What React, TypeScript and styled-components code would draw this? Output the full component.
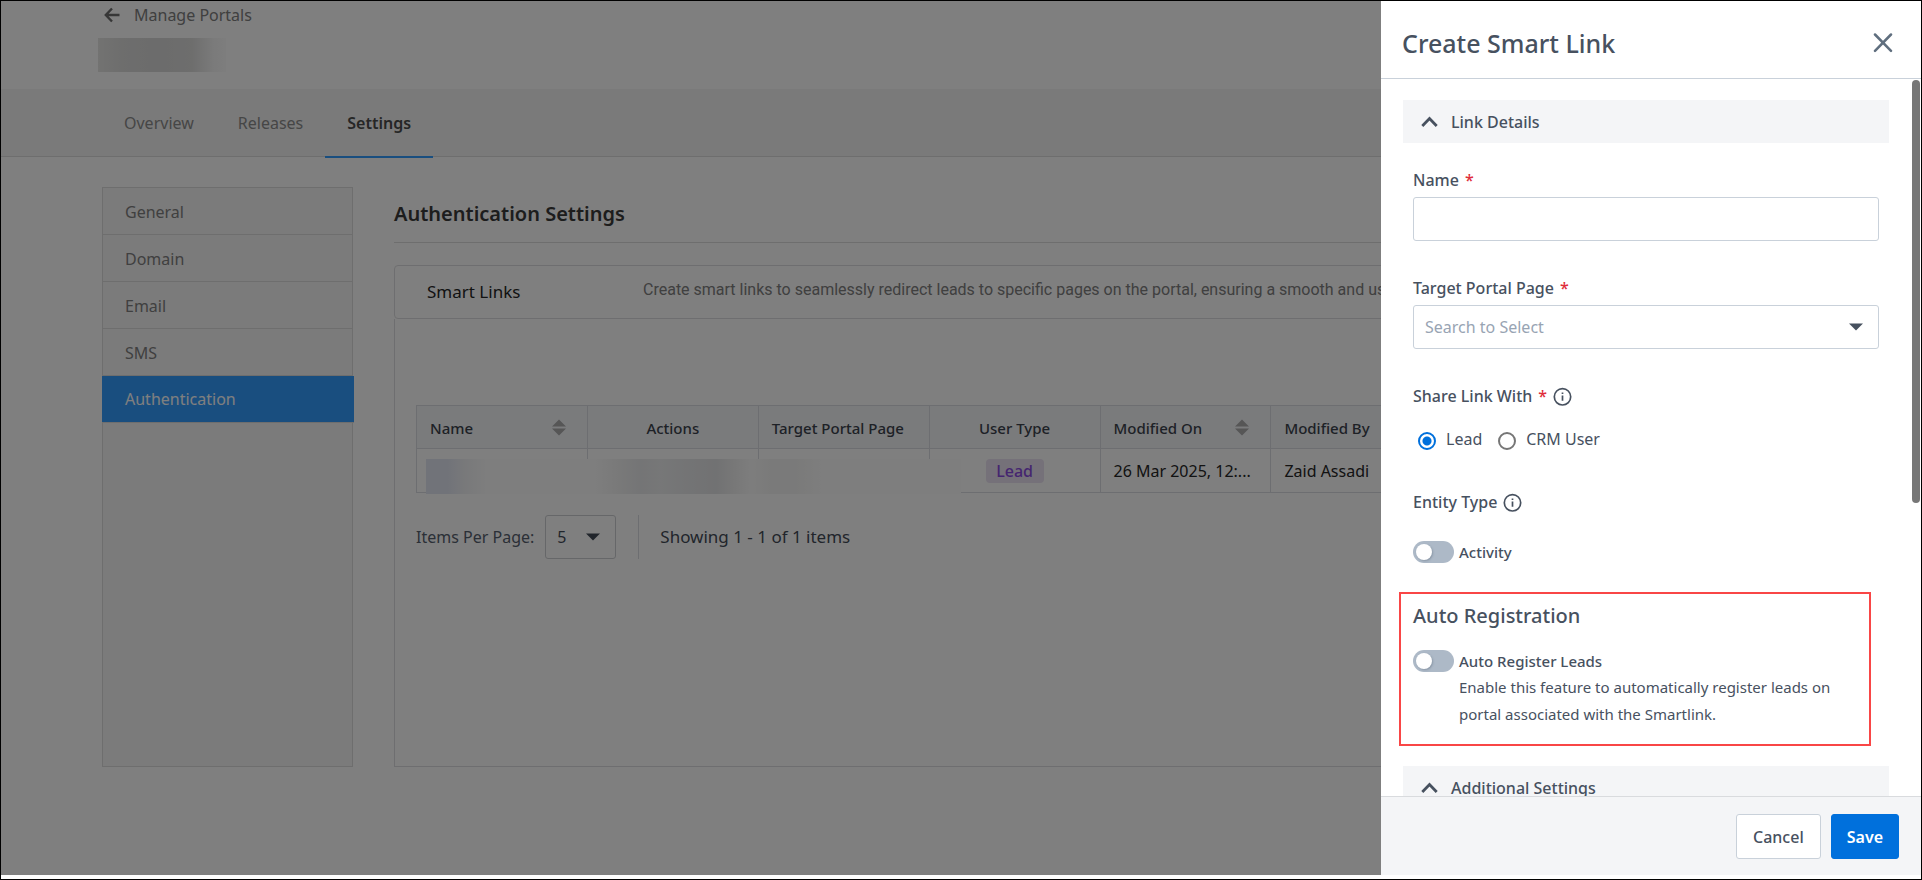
import React, { useState } from "react";
import styled, { createGlobalStyle, css } from "styled-components";

const GlobalStyle = createGlobalStyle`
  *, *::before, *::after { box-sizing: border-box; }
  body {
    margin: 0;
    background: #fff;
    font-family: "Noto Sans", "Open Sans", sans-serif;
    font-size: 16px;
    line-height: 24px;
    color: #222;
  }
  button, input, select { font: inherit; color: inherit; }
  h1, h2, h3, p { margin: 0; }
`;

/* ---------- frame ---------- */

const Frame = styled.div`
  display: flex;
  height: 100vh;
  padding-bottom: 4px;
  border: 1px solid #000;
  background: #fff;
`;

const Screen = styled.div`
  position: relative;
  flex: 1;
  min-width: 0;
  overflow: hidden;
`;

const Backdrop = styled.div`
  position: absolute;
  inset: 0;
  background: rgba(0, 0, 0, 0.5);
`;

/* ---------- portal page ---------- */

const PageHeader = styled.header`
  display: flex;
  flex-direction: column;
  align-items: flex-start;
  gap: 11px;
  padding: 2px 97px 17px;
`;

const BackLink = styled.a`
  display: flex;
  align-items: center;
  gap: 14px;
  padding-left: 6px;
  color: #808080;
  text-decoration: none;
`;

const PortalName = styled.div`
  width: 128px;
  height: 34px;
  background: linear-gradient(
    90deg,
    #e6e6e4 0,
    #dcdcdb 24px,
    #d8d8d8 60px,
    #dcdcdb 94px,
    #f6f6f6 116px,
    #fbfbfb 128px
  );
`;

const TabBar = styled.nav`
  display: flex;
  height: 68px;
  padding: 0 101px;
  border-bottom: 1px solid #dcdcdc;
  background: #f5f5f5;
`;

const Tab = styled.a<{ $active?: boolean }>`
  height: 69px;
  padding: 22px 22px 0;
  border-bottom: 2px solid transparent;
  color: #8c8c8c;
  text-decoration: none;
  ${({ $active }) =>
    $active &&
    css`
      border-color: #339cff;
      color: #4c4c4c;
      font-weight: 600;
    `}
`;

const Content = styled.div`
  display: grid;
  grid-template-columns: 251px minmax(0, 1fr);
  gap: 41px;
  min-height: 610px;
  padding: 30px 101px 0;
`;

const SideNav = styled.nav`
  border: 1px solid #dcdcdc;
  background: #f7f7f7;
`;

const SideLink = styled.a<{ $active?: boolean }>`
  display: block;
  height: 47px;
  padding: 12px 22px 0;
  border-bottom: 1px solid #dcdcdc;
  color: #808080;
  text-decoration: none;
  ${({ $active }) =>
    $active &&
    css`
      margin: 0 -2px 0 -1px;
      padding: 11px 23px 0;
      background: #339cff;
      color: #fff;
    `}
`;

const Main = styled.main`
  display: flex;
  flex-direction: column;
`;

const MainTitle = styled.h1`
  margin-bottom: 22px;
  padding: 13px 0 14px;
  border-bottom: 1px solid #dcdcdc;
  color: #3a3a3a;
  font-size: 20px;
  font-weight: 600;
  line-height: 28px;
`;

const CardHeader = styled.div`
  display: flex;
  align-items: center;
  height: 54px;
  padding: 0 32px;
  border: 1px solid #dddde0;
  border-radius: 4px;
  overflow: hidden;
`;

const CardTitle = styled.h2`
  flex: 0 0 216px;
  color: #262626;
  font-size: 17px;
  font-weight: 400;
`;

const CardText = styled.p`
  max-width: 760px;
  padding-bottom: 4px;
  overflow: hidden;
  color: #808080;
  font-family: Roboto, sans-serif;
  text-overflow: ellipsis;
  white-space: nowrap;
`;

const CardBody = styled.div`
  flex: 1;
  padding: 86px 35px 0 21px;
  border: 1px solid #dddde0;
  border-top: 0;
`;

const TableWrap = styled.div`
  position: relative;
`;

const Table = styled.table`
  width: 100%;
  table-layout: fixed;
  border-collapse: collapse;
  border: 1px solid #dadde2;
`;

const HeadCell = styled.th<{ $center?: boolean }>`
  height: 43px;
  padding: 1px 13px 0;
  border: 1px solid #dadde2;
  background: #f4f6f9;
  color: #3c434d;
  font-size: 15px;
  font-weight: 500;
  text-align: ${({ $center }) => ($center ? "center" : "left")};
  white-space: nowrap;
`;

const HeadInner = styled.span`
  display: flex;
  align-items: center;
  justify-content: space-between;
  padding-right: 8px;
`;

const Cell = styled.td<{ $center?: boolean }>`
  height: 44px;
  padding: 0 13px;
  border: 1px solid #dadde2;
  color: #262626;
  text-align: ${({ $center }) => ($center ? "center" : "left")};
  white-space: nowrap;
`;

const Tag = styled.span`
  display: inline-block;
  width: 58px;
  border-radius: 4px;
  background: #ebe2f2;
  color: #8a4be0;
  font-weight: 500;
  text-align: center;
`;

const Redaction = styled.div`
  position: absolute;
  left: 10px;
  bottom: -1px;
  width: 535px;
  height: 35px;
  background: linear-gradient(
    90deg,
    #e3e7f3 0,
    #e3e7f3 22px,
    #f1f2f5 38px,
    #fcfcfc 60px,
    #fcfcfc 170px,
    #f4f4f4 190px,
    #e9eaec 215px,
    #eeeff0 235px,
    #e8e9eb 260px,
    #e3e4e6 290px,
    #f0f0f0 308px,
    #fbfbfb 325px,
    #f5f5f4 345px,
    #f5f5f4 370px,
    #fcfcfc 395px,
    #fcfdfc 535px
  );
`;

const Pager = styled.div`
  display: flex;
  align-items: center;
  height: 44px;
  margin-top: 22px;
  color: #56606e;
`;

const PageSize = styled.span`
  position: relative;
  display: block;
  width: 71px;
  margin: 0 22px 0 11px;
  color: #434b57;
`;

const PageSizeSelect = styled.select`
  display: block;
  width: 100%;
  height: 44px;
  padding: 0 11px;
  border: 1px solid #ccced2;
  border-radius: 3px;
  background: transparent;
  appearance: none;
`;

const CaretSlot = styled.span`
  position: absolute;
  top: 0;
  bottom: 0;
  right: 16px;
  display: flex;
  align-items: center;
  pointer-events: none;
`;

const PagerInfo = styled.span`
  display: flex;
  align-items: center;
  height: 44px;
  padding-left: 21px;
  border-left: 1px solid #dadde2;
  color: #434b57;
  font-size: 17px;
`;

/* ---------- drawer ---------- */

const Drawer = styled.aside`
  position: absolute;
  top: 0;
  right: 0;
  bottom: 0;
  display: flex;
  flex-direction: column;
  width: 540px;
  background: #fff;
  color: #47515f;
`;

const DrawerHeader = styled.div`
  display: flex;
  align-items: center;
  justify-content: space-between;
  height: 78px;
  padding: 6px 24px 0 21px;
  border-bottom: 1px solid #c9d1da;
`;

const DrawerTitle = styled.h2`
  font-size: 25px;
  font-weight: 500;
  line-height: 32px;
`;

const CloseButton = styled.button`
  display: flex;
  padding: 4px;
  border: 0;
  background: none;
  color: #5f6e7e;
`;

const ScrollArea = styled.div`
  position: relative;
  flex: 1;
  min-height: 0;
`;

const DrawerBody = styled.form`
  height: 100%;
  padding: 21px 32px 0 22px;
  overflow-y: auto;
  scrollbar-width: none;
`;

const ScrollThumb = styled.div`
  position: absolute;
  top: 1px;
  right: 1px;
  width: 8px;
  height: 59%;
  border-radius: 4px;
  background: #777;
`;

const SectionToggle = styled.button`
  display: flex;
  align-items: center;
  gap: 13px;
  width: 100%;
  height: 43px;
  padding: 1px 18px 0;
  border: 0;
  background: #f4f5f7;
  font-weight: 500;
`;

const Fields = styled.div`
  display: flex;
  flex-direction: column;
  padding: 25px 10px 29px;
`;

const Field = styled.div`
  margin-bottom: 35px;
`;

const Group = styled.fieldset<{ $gap: number }>`
  min-width: 0;
  margin: 0;
  padding: 0 0 ${({ $gap }) => $gap}px;
  border: 0;
`;

const labelText = css`
  display: flex;
  align-items: center;
  gap: 6px;
  height: 24px;
  padding: 0;
  font-weight: 500;
`;

const Label = styled.label`
  ${labelText}
  margin-bottom: 5px;
`;

const Legend = styled.legend`
  ${labelText}
`;

const Required = styled.span`
  color: #e02d3a;
`;

const control = css`
  display: block;
  width: 100%;
  height: 44px;
  padding: 0 11px;
  border: 1px solid #c9d1da;
  border-radius: 3px;
  background: #fff;
`;

const TextInput = styled.input`
  ${control}
`;

const SelectWrap = styled.div`
  position: relative;
`;

const Select = styled.select`
  ${control}
  color: #98a4b3;
  appearance: none;
`;

const RadioRow = styled.div`
  display: flex;
  gap: 16px;
  padding: 19px 0 0 5px;
`;

const RadioLabel = styled.label`
  display: flex;
  align-items: center;
  gap: 10px;
`;

const Radio = styled.input`
  width: 18px;
  height: 18px;
  margin: 4px 0 0;
  border: 2px solid #767676;
  border-radius: 50%;
  appearance: none;
  &:checked {
    border-color: #0070dc;
    background: radial-gradient(circle, #0070dc 4px, #fff 5px);
  }
`;

const SwitchRow = styled.label`
  display: flex;
  align-items: center;
  gap: 5px;
  font-size: 15px;
  font-weight: 500;
`;

const Switch = styled.input`
  display: flex;
  align-items: center;
  width: 41px;
  height: 22px;
  margin: 0;
  padding: 3px;
  border-radius: 11px;
  background: #adb9c7;
  appearance: none;
  &::before {
    content: "";
    width: 16px;
    height: 16px;
    border-radius: 50%;
    background: #fff;
    box-shadow: 1px 1px 2px rgba(60, 75, 95, 0.3);
  }
  &:checked {
    justify-content: flex-end;
    background: #0070dc;
  }
`;

const EntityRow = styled.div`
  padding-top: 26px;
`;

const Highlight = styled.section`
  margin: -21px 18px 20px -4px;
  padding: 8px 12px 16px;
  border: 2px solid #f94646;
`;

const GroupTitle = styled.h3`
  margin-bottom: 19px;
  font-size: 20px;
  font-weight: 500;
  line-height: 28px;
`;

const Hint = styled.p`
  padding: 1px 0 0 46px;
  font-size: 15px;
  line-height: 27px;
`;

const DrawerFooter = styled.div`
  display: flex;
  justify-content: flex-end;
  gap: 10px;
  height: 79px;
  padding: 17px 22px;
  border-top: 1px solid #d9dbde;
  background: #f4f5f7;
`;

const Button = styled.button<{ $primary?: boolean }>`
  height: 45px;
  padding: 1px 16px 0;
  border: 1px solid #c9d1da;
  border-radius: 3px;
  background: #fff;
  font-weight: 500;
  ${({ $primary }) =>
    $primary &&
    css`
      padding: 1px 15px 0;
      border-color: #0070dc;
      background: #0070dc;
      color: #fff;
      font-weight: 600;
    `}
`;

/* ---------- icons ---------- */

const ArrowLeft = () => (
  <svg width="16" height="16" viewBox="0 0 16 16" fill="none" stroke="#6e6e6e" strokeWidth="2.4">
    <path d="M15.5 8H2M8 1.5 1.8 8 8 14.5" />
  </svg>
);

const SortIcon = () => (
  <svg width="14" height="17" viewBox="0 0 14 17" fill="#acacac">
    <path d="M7 0.5 14 7.5H0zM0 9.5H14L7 16.5z" />
  </svg>
);

const Caret = ({ color }: { color: string }) => (
  <svg width="14" height="8" viewBox="0 0 14 8" fill={color}>
    <path d="M0 0.5H14L7 7.5z" />
  </svg>
);

const ChevronUp = () => (
  <svg width="17" height="12" viewBox="0 0 17 12" fill="none" stroke="currentColor" strokeWidth="2.8">
    <path d="M1.3 10 8.5 2.6 15.7 10" />
  </svg>
);

const CloseIcon = () => (
  <svg width="20" height="20" viewBox="0 0 20 20" fill="none" stroke="currentColor" strokeWidth="2.5" strokeLinecap="round">
    <path d="M2 1.5 18 17.8M18 1.5 2 17.8" />
  </svg>
);

const InfoIcon = () => (
  <svg width="19" height="19" viewBox="0 0 19 19" fill="none" stroke="currentColor" strokeWidth="1.7">
    <circle cx="9.5" cy="9.8" r="8.2" />
    <path d="M9.5 8.4V13.8M9.5 5.4V7.1" />
  </svg>
);

/* ---------- app ---------- */

const tabs = ["Overview", "Releases", "Settings"];
const sections = ["General", "Domain", "Email", "SMS", "Authentication"];

const columns = [
  { title: "Name", sortable: true },
  { title: "Actions", center: true },
  { title: "Target Portal Page" },
  { title: "User Type", center: true },
  { title: "Modified On", sortable: true },
  { title: "Modified By" },
  { title: "" },
  { title: "" },
];

export default function App() {
  const [shareWith, setShareWith] = useState("Lead");

  return (
    <Frame>
      <GlobalStyle />
      <Screen>
        <PageHeader>
          <BackLink href="#portals">
            <ArrowLeft />
            Manage Portals
          </BackLink>
          <PortalName />
        </PageHeader>
        <TabBar>
          {tabs.map((tab) => (
            <Tab key={tab} href={`#${tab}`} $active={tab === "Settings"}>
              {tab}
            </Tab>
          ))}
        </TabBar>
        <Content>
          <SideNav>
            {sections.map((item) => (
              <SideLink key={item} href={`#${item}`} $active={item === "Authentication"}>
                {item}
              </SideLink>
            ))}
          </SideNav>
          <Main>
            <MainTitle>Authentication Settings</MainTitle>
            <CardHeader>
              <CardTitle>Smart Links</CardTitle>
              <CardText>
                Create smart links to seamlessly redirect leads to specific pages on the portal,
                ensuring a smooth and user-friendly experience.
              </CardText>
            </CardHeader>
            <CardBody>
              <TableWrap>
                <Table>
                  <thead>
                    <tr>
                      {columns.map((col, i) => (
                        <HeadCell key={i} $center={col.center}>
                          {col.sortable ? (
                            <HeadInner>
                              {col.title}
                              <SortIcon />
                            </HeadInner>
                          ) : (
                            col.title
                          )}
                        </HeadCell>
                      ))}
                    </tr>
                  </thead>
                  <tbody>
                    <tr>
                      <Cell />
                      <Cell />
                      <Cell />
                      <Cell $center>
                        <Tag>Lead</Tag>
                      </Cell>
                      <Cell>26 Mar 2025, 12:...</Cell>
                      <Cell>Zaid Assadi</Cell>
                      <Cell />
                      <Cell />
                    </tr>
                  </tbody>
                </Table>
                <Redaction />
              </TableWrap>
              <Pager>
                <label htmlFor="page-size">Items Per Page:</label>
                <PageSize>
                  <PageSizeSelect id="page-size" defaultValue="5">
                    <option>5</option>
                  </PageSizeSelect>
                  <CaretSlot>
                    <Caret color="#434b57" />
                  </CaretSlot>
                </PageSize>
                <PagerInfo>Showing 1 - 1 of 1 items</PagerInfo>
              </Pager>
            </CardBody>
          </Main>
        </Content>

        <Backdrop />

        <Drawer role="dialog" aria-labelledby="drawer-title">
          <DrawerHeader>
            <DrawerTitle id="drawer-title">Create Smart Link</DrawerTitle>
            <CloseButton type="button" aria-label="Close">
              <CloseIcon />
            </CloseButton>
          </DrawerHeader>
          <ScrollArea>
            <DrawerBody id="smart-link">
              <SectionToggle type="button">
                <ChevronUp />
                Link Details
              </SectionToggle>
              <Fields>
                <Field>
                  <Label htmlFor="link-name">
                    Name <Required>*</Required>
                  </Label>
                  <TextInput id="link-name" type="text" />
                </Field>
                <Field>
                  <Label htmlFor="target-page">
                    Target Portal Page <Required>*</Required>
                  </Label>
                  <SelectWrap>
                    <Select id="target-page">
                      <option>Search to Select</option>
                    </Select>
                    <CaretSlot>
                      <Caret color="#47515f" />
                    </CaretSlot>
                  </SelectWrap>
                </Field>
                <Group $gap={39}>
                  <Legend>
                    Share Link With <Required>*</Required> <InfoIcon />
                  </Legend>
                  <RadioRow>
                    {["Lead", "CRM User"].map((who) => (
                      <RadioLabel key={who}>
                        <Radio
                          type="radio"
                          name="share-with"
                          checked={shareWith === who}
                          onChange={() => setShareWith(who)}
                        />
                        {who}
                      </RadioLabel>
                    ))}
                  </RadioRow>
                </Group>
                <Group $gap={20}>
                  <Legend>
                    Entity Type <InfoIcon />
                  </Legend>
                  <EntityRow>
                    <SwitchRow>
                      <Switch type="checkbox" role="switch" />
                      Activity
                    </SwitchRow>
                  </EntityRow>
                </Group>
              </Fields>
              <Highlight>
                <GroupTitle>Auto Registration</GroupTitle>
                <SwitchRow>
                  <Switch type="checkbox" role="switch" />
                  Auto Register Leads
                </SwitchRow>
                <Hint>
                  Enable this feature to automatically register leads on portal associated with the
                  Smartlink.
                </Hint>
              </Highlight>
              <SectionToggle type="button">
                <ChevronUp />
                Additional Settings
              </SectionToggle>
            </DrawerBody>
            <ScrollThumb />
          </ScrollArea>
          <DrawerFooter>
            <Button type="button">Cancel</Button>
            <Button type="submit" form="smart-link" $primary>
              Save
            </Button>
          </DrawerFooter>
        </Drawer>
      </Screen>
    </Frame>
  );
}
